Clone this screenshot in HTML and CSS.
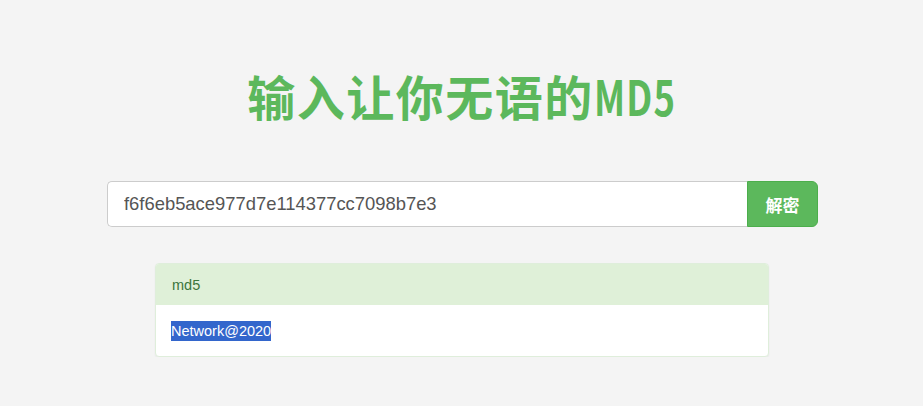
FILE: index.html
```html
<!DOCTYPE html>
<html lang="zh-CN">
<head>
    <meta charset="UTF-8">
    <meta name="viewport" content="width=device-width, initial-scale=1.0">
    <title>输入让你无语的MD5</title>
    <link rel="stylesheet" href="styles.css">
</head>
<body>
    <div class="page">
        <h1 class="title">输入让你无语的<span class="title-latin">MD5</span></h1>
        <div class="search">
            <input class="search-input" type="text" value="f6f6eb5ace977d7e114377cc7098b7e3">
            <button class="search-btn">解密</button>
        </div>
        <div class="result">
            <div class="result-head">md5</div>
            <div class="result-body"><span class="picked">Network@2020</span></div>
        </div>
    </div>
</body>
</html>
```

FILE: styles.css
```css
body {
    margin: 0;
    background-color: #f4f4f4;
    font-family: "Liberation Sans", Arial, "Noto Sans CJK SC", sans-serif;
    color: #333;
}

.page {
    display: flex;
    flex-direction: column;
    align-items: center;
    padding-top: 61px;
}

.title {
    margin: 0;
    font-family: "Noto Sans CJK SC", sans-serif;
    font-size: 48px;
    font-weight: 700;
    line-height: 68px;
    color: #5cb85c;
    letter-spacing: 1.5px;
}

/* the latin part of the heading is narrow in the original */
.title-latin {
    display: inline-block;
    transform: scaleX(0.76);
    transform-origin: left center;
    margin-right: -26px;
}

.search {
    display: flex;
    width: 711px;
    margin-top: 52px;
    margin-left: 2px;
}

.search-input {
    flex: 1;
    height: 46px;
    box-sizing: border-box;
    padding: 0 16px;
    border: 1px solid #ccc;
    border-right: none;
    border-radius: 5px 0 0 5px;
    background: #fff;
    font-family: "Liberation Sans", Arial, sans-serif;
    font-size: 18.4px;
    color: #555;
    outline: none;
}

.search-btn {
    width: 71px;
    height: 46px;
    border: 1px solid #4cae4c;
    border-radius: 0 6px 6px 0;
    background-color: #5cb85c;
    color: #fff;
    font-family: "Noto Sans CJK SC", sans-serif;
    font-size: 17px;
    font-weight: 700;
    cursor: pointer;
}

.result {
    width: 612px;
    margin-top: 36px;
    margin-left: 1px;
    border: 1px solid #dfeedb;
    border-radius: 4px;
    background: #fff;
    box-shadow: 0 1px 2px rgba(0, 0, 0, 0.05);
    overflow: hidden;
}

.result-head {
    height: 41px;
    padding: 0 16px;
    display: flex;
    align-items: center;
    background-color: #dff0d8;
    color: #3c763d;
    font-size: 14.5px;
}

.result-body {
    height: 51px;
    padding: 0 15px;
    display: flex;
    align-items: center;
    font-size: 14.5px;
    color: #333;
}

.picked {
    background-color: #3366cc;
    color: #fff;
    line-height: 20px;
}
```
